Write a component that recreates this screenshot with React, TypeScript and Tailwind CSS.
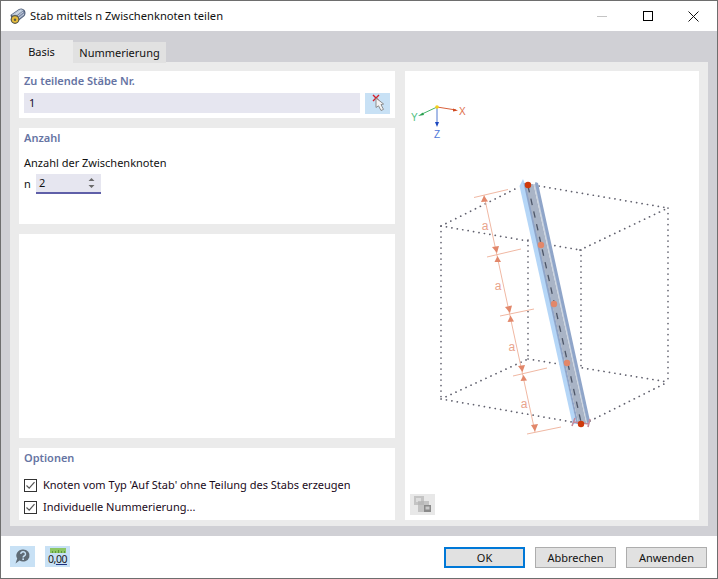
import type { ReactNode } from "react";

const font = "font-['Noto_Sans','Open_Sans',sans-serif]";

function Section({ title, className, children }: { title?: string; className: string; children?: ReactNode }) {
  return (
    <div className={`bg-white px-[5px] ${className}`}>
      {title && <div className="h-[18px] pt-[2px] text-[11px] leading-[16px] font-semibold text-[#6674a3]">{title}</div>}
      {children}
    </div>
  );
}

function CheckRow({ label }: { label: string }) {
  return (
    <div className="flex h-[22px] items-center gap-[6px]">
      <div className="flex h-[13px] w-[13px] items-center justify-center border border-[#333333] bg-white">
        <svg width="11" height="11" viewBox="0 0 11 11" fill="none" stroke="#555555" strokeWidth="1.2">
          <path d="M1.5 5.5 L4.2 8.2 L9.5 2.2" />
        </svg>
      </div>
      <span className="whitespace-nowrap text-[11px] text-[#1a0a1a]">{label}</span>
    </div>
  );
}

function DialogButton({ label, primary }: { label: string; primary?: boolean }) {
  return (
    <button
      className={`h-[21px] w-[81px] bg-[#e1e1e1] text-[11px] leading-none text-[#111111] ${
        primary ? "border-2 border-[#0078d7]" : "border border-[#adadad]"
      }`}
    >
      {label}
    </button>
  );
}

function TitleIcon() {
  return (
    <svg width="18" height="18" viewBox="0 0 18 18">
      <path d="M1.5 8 L10 2 Q13 0.5 15.5 3 Q17.5 6 15.5 9 L8 15 L3 14 Z" fill="#4c5b75" />
      <path d="M2.5 8 L10 2.8 Q12.5 1.5 14.5 3.5 L6 10 Z" fill="#b9c6d8" />
      <path d="M6 10 L14.5 3.5 Q16.5 6 15 8.5 L8 14 Z" fill="#7d8ba8" />
      <path d="M7 7 L12 3.5 M9 9 L14 5 M10 11 L15 7" stroke="#dfe6ef" strokeWidth="0.8" />
      <circle cx="6" cy="12.5" r="4.4" fill="#5a5a48" />
      <circle cx="6" cy="12.5" r="3.2" fill="#e6bc3c" />
      <circle cx="6" cy="12.8" r="1.2" fill="#5a5a48" />
    </svg>
  );
}

function PickIcon() {
  return (
    <svg width="25" height="21" viewBox="0 0 25 21">
      <path d="M8 2 L14 8 M14 2 L8 8" stroke="#d4202a" strokeWidth="1.4" />
      <path d="M11 5 L11 14.5 L13.5 12.8 L16 17.5 L18.5 16.4 L16 11.6 L18.6 11 Z" fill="#f4f4f4" stroke="#858585" strokeWidth="0.9" />
    </svg>
  );
}

function HelpIcon() {
  return (
    <svg width="25" height="21" viewBox="0 0 25 21">
      <path d="M13 3.5 a6.5 6 0 1 1 -3.5 11 L5.5 17.5 L7.2 12.5 A6.5 6 0 0 1 13 3.5 Z" fill="#5f6b75" />
      <path d="M10.7 7.8 a2.4 2.2 0 1 1 3.4 2.2 q-1 .5 -1 1.6" fill="none" stroke="#c8e1f5" strokeWidth="1.5" />
      <rect x="12.3" y="12.4" width="1.7" height="1.6" fill="#c8e1f5" />
    </svg>
  );
}

function UnitsIcon() {
  return (
    <div className="flex h-[21px] w-[25px] flex-col items-center bg-[#c8e1f5] pt-[2px]">
      <svg width="16" height="5" viewBox="0 0 16 5" className="block shrink-0">
        <rect width="16" height="5" fill="#8cc665" />
        <path d="M2.5 5 V3 M5.5 5 V3 M8.5 5 V2 M11.5 5 V3 M14.5 5 V3" stroke="#5d9a3c" strokeWidth="1" />
      </svg>
      <div className="text-[10.5px] leading-[12px] tracking-[-0.5px] text-[#1a1a1a]">
        0,<span className="underline decoration-[#1b2f80]">00</span>
      </div>
    </div>
  );
}

function ViewIcon() {
  return (
    <svg width="25" height="21" viewBox="0 0 25 21">
      <rect width="25" height="21" fill="#e8e8e8" />
      <rect x="4" y="2" width="10" height="9" fill="#c4c4c4" />
      <rect x="6" y="4" width="5" height="4" fill="#dddddd" />
      <rect x="8" y="7" width="11" height="11" fill="#b3b3b3" opacity="0.7" />
      <rect x="14" y="11" width="7" height="7" fill="#8a8a8a" />
      <path d="M15.5 12.5 h4 v3 h-4 Z" fill="#c9c9c9" />
    </svg>
  );
}

const dots = { stroke: "#62626f", strokeWidth: 1.7, strokeLinecap: "round" as const, strokeDasharray: "0.1 5.4", fill: "none" };

// dimension ticks along the member
const ticks = [
  [474, 197.5, 508, 189.5],
  [487, 257, 521, 249],
  [500, 316, 534, 309],
  [513, 376, 547, 368],
  [527, 434, 561, 427],
];

const arrows = [
  "M484 195.5 L481 202 L488 201.5 Z",
  "M497 253 L492 247 L499 246 Z",
  "M497.5 256 L494.5 262 L501 262 Z",
  "M510 313 L505 307 L512 305.5 Z",
  "M510.5 315.5 L507.5 322 L514 321.5 Z",
  "M522.5 372 L518 366 L525 365 Z",
  "M523.5 375 L520.5 381 L527 380.5 Z",
  "M535 431.5 L531 425 L538 424 Z",
];

const labels = [
  [481.7, 230],
  [494.7, 290],
  [508.5, 351],
  [520.7, 408],
];

function Model() {
  return (
    <svg width="294" height="449" viewBox="405 71 294 449" className="block">
      {/* axes */}
      <path d="M437 107 L456 110" stroke="#d9613c" strokeWidth="1" />
      <path d="M458 110.5 L453 108.5 L453 111.5 Z" fill="#d04a20" />
      <path d="M437 107 L421 114.5" stroke="#45b56b" strokeWidth="1" />
      <path d="M418 116 L423 112.5 L424 115 Z" fill="#2aa050" />
      <path d="M437 107 L437 124" stroke="#5078d0" strokeWidth="1" />
      <path d="M437 127 L435 122 L439 122 Z" fill="#1c48c0" />
      <circle cx="437" cy="107" r="1.8" fill="#f5d018" />
      <text x="459" y="114.5" fontSize="10" fill="#e0704c" fontFamily="Liberation Sans, sans-serif">X</text>
      <text x="411" y="120.5" fontSize="10" fill="#50c080" fontFamily="Liberation Sans, sans-serif">Y</text>
      <text x="434" y="137.5" fontSize="10" fill="#5078d8" fontFamily="Liberation Sans, sans-serif">Z</text>

      {/* box */}
      <path {...dots} d="M441 226 L519 187 M441 226 L580 250 M539 186 L668 208 M580 250 L668 208" />
      <path {...dots} d="M441 226 L441 399 M528 240 L528 359 M581 250 L581 368 M668 208 L668 382" />
      <path {...dots} d="M441 399 L528 359 M441 399 L572 422 M528 359 L668 382 M590 421 L668 382" />

      {/* member */}
      <path d="M519.5 186 L523 179 L525 184 L576.5 424 L572.5 424 Z" fill="#b5d6f7" />
      <path d="M523.5 183 L526 183 L578.5 424 L576.5 424 Z" fill="#8fa5c9" />
      <path d="M525.5 184 L533.5 184 L586.5 424 L578.5 424 Z" fill="#a9b4c6" />
      <path d="M533.5 184 L535.5 184 L588 424 L586.5 424 Z" fill="#c9d2de" />
      <path d="M535 184 L535.5 182 L538 183 L590 421 L587.5 424 Z" fill="#8fa5c9" />
      <path d="M528 186 L581 422" stroke="#4d5668" strokeWidth="1.3" strokeDasharray="6.5 6.5" fill="none" />
      <path d="M572 426 L575 418 M588 427 L590 419 M574 422 L589 424" stroke="#c58a9c" strokeWidth="1.6" fill="none" />

      {/* nodes */}
      <circle cx="541" cy="245" r="3.2" fill="#e2876a" />
      <circle cx="554" cy="304" r="3.2" fill="#e2876a" />
      <circle cx="567" cy="363" r="3.2" fill="#e2876a" />
      <circle cx="528" cy="185" r="3.2" fill="#cf3a0c" />
      <circle cx="581" cy="424" r="3.2" fill="#cf3a0c" />

      {/* dimensions */}
      <path d="M484 195 L535 432" stroke="#f0b8a3" strokeWidth="1" fill="none" />
      {ticks.map(([x1, y1, x2, y2]) => (
        <line key={x1} x1={x1} y1={y1} x2={x2} y2={y2} stroke="#f0b8a3" strokeWidth="1" />
      ))}
      {arrows.map((d) => (
        <path key={d} d={d} fill="#e2876a" />
      ))}
      {labels.map(([x, y]) => (
        <text key={x} x={x} y={y} fontSize="12" fill="#e9a48c" fontFamily="Liberation Sans, sans-serif">a</text>
      ))}
    </svg>
  );
}

export default function App() {
  return (
    <div className={`flex h-[579px] w-[718px] flex-col border border-[#6e6e6e] bg-white ${font}`}>
      {/* Title bar */}
      <div className="flex h-[30px] shrink-0 items-center pl-[8px]">
        <TitleIcon />
        <span className="ml-[3px] text-[11.2px] whitespace-nowrap text-[#111111]">Stab mittels n Zwischenknoten teilen</span>
        <div className="ml-auto flex items-center">
          <div className="flex h-[30px] w-[46px] items-center justify-center">
            <div className="h-[1px] w-[10px] bg-[#c4c4c4]" />
          </div>
          <div className="flex h-[30px] w-[46px] items-center justify-center">
            <div className="h-[10px] w-[10px] border border-black" />
          </div>
          <div className="flex h-[30px] w-[46px] items-center justify-center pr-[1px]">
            <svg width="11" height="11" viewBox="0 0 11 11" stroke="#111111" strokeWidth="1" fill="none">
              <path d="M0.5 0.5 L10.5 10.5 M10.5 0.5 L0.5 10.5" />
            </svg>
          </div>
        </div>
      </div>

      {/* Main area */}
      <div className="flex flex-1 flex-col bg-[#d0d0d5] px-[9px] pt-[9px] pb-[10px]">
        <div className="flex h-[22px] shrink-0 items-start text-[11px] text-[#111111]">
          <div className="flex h-[22px] w-[63px] items-center justify-center bg-[#ebebeb] pt-[3px]">Basis</div>
          <div className="relative mt-[2px] flex h-[21px] w-[93px] items-center justify-center bg-[#e1e1e1] pt-[1px]">Nummerierung</div>
        </div>
        <div className="flex flex-1 gap-[10px] bg-[#ebebeb] px-[9px] pt-[9px] pb-[6px]">
          <div className="flex w-[376px] flex-col gap-[10px]">
            <Section title="Zu teilende Stäbe Nr." className="h-[47px]">
              <div className="mt-[4px] flex gap-[5px]">
                <div className="flex h-[20px] w-[336px] items-center bg-[#e6e6f0] pl-[5px] text-[11px] text-[#1a0a2a]">1</div>
                <div className="h-[21px] w-[25px] bg-[#c8e1f5]">
                  <PickIcon />
                </div>
              </div>
            </Section>
            <Section title="Anzahl" className="h-[96px]">
              <div className="mt-[9px] text-[11px] leading-[16px] text-[#111111]">Anzahl der Zwischenknoten</div>
              <div className="mt-[3px] flex items-center gap-[5px] text-[11px] text-[#111111]">
                <span className="w-[7px]">n</span>
                <div className="flex h-[20px] w-[65px] items-center justify-between border-b-2 border-[#5f5fa8] bg-[#e6e6f0] pr-[6px] pl-[3px]">
                  <span>2</span>
                  <svg width="7" height="12" viewBox="0 0 7 12" fill="#6b6b6b">
                    <path d="M3.5 1 L6.5 4 L0.5 4 Z M3.5 11 L0.5 8 L6.5 8 Z" />
                  </svg>
                </div>
              </div>
            </Section>
            <Section className="flex-1" />
            <Section title="Optionen" className="h-[72px]">
              <div className="mt-[8px]">
                <CheckRow label="Knoten vom Typ 'Auf Stab' ohne Teilung des Stabs erzeugen" />
                <CheckRow label="Individuelle Nummerierung..." />
              </div>
            </Section>
          </div>
          <div className="relative w-[294px] bg-white">
            <Model />
            <div className="absolute bottom-[5px] left-[5px]">
              <ViewIcon />
            </div>
          </div>
        </div>
      </div>

      {/* Footer */}
      <div className="flex h-[42px] shrink-0 items-start justify-between pt-[10px] pr-[10px] pl-[9px]">
        <div className="flex gap-[10px]">
          <div className="h-[21px] w-[25px] bg-[#c8e1f5]">
            <HelpIcon />
          </div>
          <UnitsIcon />
        </div>
        <div className="mt-[1px] flex gap-[10px]">
          <DialogButton label="OK" primary />
          <DialogButton label="Abbrechen" />
          <DialogButton label="Anwenden" />
        </div>
      </div>
    </div>
  );
}
